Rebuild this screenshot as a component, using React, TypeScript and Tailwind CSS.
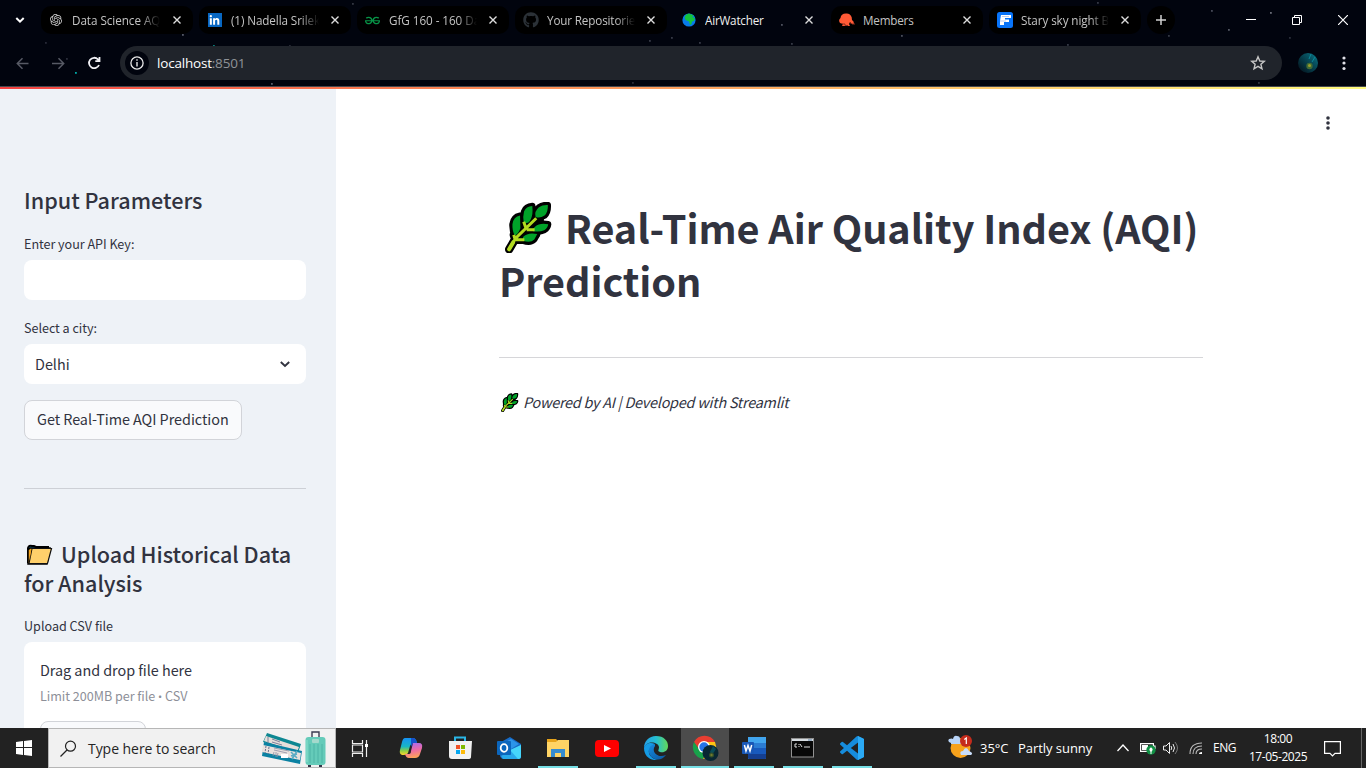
import type { ReactNode } from "react";
import { SiOpenai, SiGeeksforgeeks } from "react-icons/si";
import { FaGithub, FaLinkedinIn } from "react-icons/fa";

const leafBlades =
  "M157 22Q158 44 147 54Q133 63 120 58Q115 42 130 29Q141 21 157 22ZM110 25Q91 26 85 42Q81 57 84 74Q98 82 105 66Q113 50 110 25ZM73 54Q53 58 50 80Q49 100 57 114Q68 110 74 92ZM158 80Q132 75 119 87Q108 96 112 101Q132 105 146 98Q157 91 158 80ZM125 110Q96 104 82 119L82 130Q105 138 116 126Z";
const leafStem = "M40 156L60 122L122 62M84 73L90 90M93 97H117M54 112L58 126M60 127H86";

function Leaf({ className }: { className: string }) {
  return (
    <svg viewBox="22 13 147 154" className={className} strokeLinejoin="round">
      <path d={leafBlades} fill="#000" stroke="#000" strokeWidth="19" />
      <path d={leafStem} fill="none" stroke="#000" strokeWidth="25" strokeLinecap="round" />
      <path d="M70 120L120 60L145 60V85L130 120Z" fill="#000" />
      <path d={leafBlades} fill="#00a229" />
      <path d={leafStem} fill="none" stroke="#b2db20" strokeWidth="9" />
      <path d="M40 156L52 135" fill="none" stroke="#b2db20" strokeWidth="12" strokeLinecap="round" />
    </svg>
  );
}

function Folder() {
  return (
    <svg viewBox="0 0 27 22" className="h-[22px] w-[27px]">
      <path d="M2 19V4Q3 1 6 2H8L10 3H23" fill="#219bd3" stroke="#000" strokeWidth="2" />
      <path d="M2 6L4 4H24L21 20H2Z" fill="#f7a51c" stroke="#000" strokeWidth="1.5" />
      <path d="M6 4.5H25.5L21.5 19.5H3Z" fill="#ffd06b" stroke="#111" strokeWidth="1.2" />
      <path d="M3.5 6V17L5.5 5Z" fill="#f7a51c" />
    </svg>
  );
}

function Earth() {
  return (
    <svg viewBox="0 0 14 14" className="h-[14px] w-[14px]">
      <circle cx="7" cy="7" r="6.6" fill="#087bea" />
      <path d="M2.5 4Q4 1 7 .6L12 2.5L10 4L13 5L12 8L10 8.5L9.5 11L8 12L7 8.5L3.5 7Z" fill="#15c43c" />
    </svg>
  );
}

function Ghost() {
  return (
    <svg viewBox="0 0 16 14" className="h-[14px] w-4">
      <path d="M1 10Q-1 7 1.5 5Q2 0 8 .5Q13 1 13 7Q15 8 15 11H12L11 9L10 11L11 13H3L4 11Z" fill="#ff5a36" />
      <path d="M3 11H6V12.5H9M11 9L13 11H16" stroke="#8d2d1c" fill="none" />
    </svg>
  );
}

function FlowLogo() {
  return (
    <svg viewBox="0 0 16 16" className="h-4 w-4">
      <rect width="16" height="16" rx="2.5" fill="#0874f9" />
      <path d="M4 3H14V6H8V7.5H12V10H7V13H3V9Z" fill="#fff" />
      <path d="M5 4.5H12M3 9H9" stroke="#9db7e8" strokeWidth=".7" />
    </svg>
  );
}

function Cross() {
  return (
    <svg viewBox="0 0 8 8" className="h-2 w-2 shrink-0">
      <path d="M.5.5L7.5 7.5M7.5.5L.5 7.5" stroke="#dedede" strokeWidth="1.4" />
    </svg>
  );
}

type TabItem = { title: string; icon: ReactNode; active?: boolean; spacing: string; fade?: boolean };
const tabs: TabItem[] = [
  { title: "Data Science AQI", icon: <SiOpenai className="mr-[2px] h-3 w-3 text-[#d0d0d0]" />, spacing: "-ml-px tracking-[-0.05px]", fade: true },
  {
    title: "(1) Nadella Srilekha",
    icon: (
      <span className="mr-px flex h-[14px] w-[14px] items-center justify-center bg-[#0867c2]">
        <FaLinkedinIn className="h-[11px] w-[11px] text-white" />
      </span>
    ),
    spacing: "tracking-[-0.1px]",
    fade: true,
  },
  { title: "GfG 160 - 160 Days", icon: <SiGeeksforgeeks className="mr-px h-[15px] w-[15px] text-[#079447]" />, spacing: "tracking-[-0.05px]", fade: true },
  { title: "Your Repositories", icon: <FaGithub className="h-4 w-4 text-[#2b3137]" />, spacing: "tracking-[-0.15px]", fade: true },
  { title: "AirWatcher", icon: <Earth />, active: true, spacing: "tracking-[-0.2px]" },
  { title: "Members", icon: <Ghost />, spacing: "tracking-[-0.2px]" },
  { title: "Stary sky night Background", icon: <FlowLogo />, spacing: "tracking-[-0.1px]", fade: true },
];

function Tab({ tab }: { tab: TabItem }) {
  return (
    <div className={tab.active ? "flex h-7 w-[152px] items-center rounded-[10px] pr-[12px] pl-[8px]" : "flex h-7 w-[152px] items-center rounded-[10px] bg-black pr-[12px] pl-[8px]"}>
      <span className="mr-2 flex w-4 shrink-0 justify-center">{tab.icon}</span>
      <span
        className={`w-[88px] overflow-hidden pt-[2px] text-[11.7px] whitespace-nowrap ${tab.spacing} ${tab.active ? "text-[#f0f0f0]" : "text-[#c4c4c4]"} ${tab.fade ? "[mask-image:linear-gradient(to_right,black_78%,transparent)]" : ""}`}
      >
        {tab.title}
      </span>
      <span className="ml-auto">
        <Cross />
      </span>
    </div>
  );
}

const stars: [number, number, string][] = [
  [45, 42, "#262936"], [182, 34, "#545967"], [75, 72, "#00a9a5"], [213, 45, "#087b78"], [271, 83, "#555966"],
  [66, 58, "#292c38"], [289, 45, "#252834"], [352, 3, "#323641"], [632, 82, "#282b36"], [649, 40, "#353945"],
  [671, 37, "#353945"], [699, 42, "#353945"], [781, 24, "#4c505c"], [791, 43, "#343844"], [901, 35, "#484c58"],
  [1067, 44, "#343844"], [1097, 2, "#333744"], [1211, 10, "#454956"], [1228, 29, "#535763"], [1270, 12, "#686b76"],
  [1289, 37, "#292d38"], [1258, 82, "#30343f"], [1168, 35, "#343844"], [143, 6, "#444956"],
];

function Browser() {
  return (
    <header className="relative h-[87px] shrink-0 border-b border-[#44474e] bg-[#01040e] font-['Open_Sans','Noto_Sans',sans-serif]">
      <svg className="pointer-events-none absolute inset-0 h-[86px] w-full" viewBox="0 0 1366 86">
        {stars.map(([x, y, color]) => (
          <rect key={`${x}-${y}`} x={x} y={y} width="1.8" height="1.8" fill={color} />
        ))}
      </svg>
      <div className="relative flex h-10 items-center">
        <div className="flex w-[40px] justify-center">
          <svg viewBox="0 0 10 7" className="h-[7px] w-[10px]">
            <path d="M1.3 1L5 4.7L8.7 1" fill="none" stroke="#fff" strokeWidth="2" />
          </svg>
        </div>
        <div className="flex gap-[6px] pl-px">
          {tabs.map((t) => (
            <Tab key={t.title} tab={t} />
          ))}
          <div className="flex h-7 w-7 items-center justify-center rounded-full bg-black">
            <svg viewBox="0 0 10 10" className="h-[10px] w-[10px]">
              <path d="M5 0V10M0 5H10" stroke="#d0d0d0" strokeWidth="1.5" />
            </svg>
          </div>
        </div>
        <div className="ml-auto flex items-center gap-9 pr-[18px]">
          <svg className="h-[10px] w-[10px]" viewBox="0 0 10 10"><path d="M0 4.5H10" stroke="#fff" /></svg>
          <svg className="h-[10px] w-[10px]" viewBox="0 0 10 10"><path d="M.5 2.5H7.5V9.5H.5ZM2.5 2.5V.5H9.5V7.5H7.5" stroke="#fff" fill="none" /></svg>
          <svg className="h-[10px] w-[10px]" viewBox="0 0 10 10"><path d="M0 0L10 10M10 0L0 10" stroke="#fff" strokeWidth="1.2" /></svg>
        </div>
      </div>
      <div className="relative flex h-[46px] items-center">
        <div className="flex w-[120px] items-center gap-[23px] pl-4">
          <svg viewBox="0 0 13 13" className="h-[13px] w-[13px]"><path d="M12.5 6.5H1.5M6.5 1.3L1.3 6.5L6.5 11.7" fill="none" stroke="#575a65" strokeWidth="1.5" /></svg>
          <svg viewBox="0 0 13 13" className="h-[13px] w-[13px]"><path d="M0 6.5H11.5M6.5 1.3L11.7 6.5L6.5 11.7" fill="none" stroke="#575a65" strokeWidth="1.5" /></svg>
          <svg viewBox="0 0 14 14" className="-ml-px h-[14px] w-[14px]"><path d="M12 9A5.2 5.2 0 1 1 10.9 3.3L12.5 5M12.5 1V5.2H8.3" fill="none" stroke="#f1f1f5" strokeWidth="1.8" /></svg>
        </div>
        <div className="flex h-[34px] w-[1162px] items-center rounded-full bg-[#20242b] pr-4 pl-[5px]">
          <span className="flex h-6 w-6 items-center justify-center rounded-full bg-[#01040e]">
            <svg viewBox="0 0 14 14" className="h-[14px] w-[14px]"><circle cx="7" cy="7" r="6.1" stroke="#e8e8e8" fill="none" strokeWidth="1.3" /><path d="M7 6V10.5M7 3.3V4.8" stroke="#e8e8e8" strokeWidth="1.4" /></svg>
          </span>
          <span className="ml-2 pt-px text-[13.5px] tracking-[-0.2px] text-[#8f9297]"><span className="text-white">localhost</span>:8501</span>
          <svg viewBox="0 0 16 16" className="ml-auto h-4 w-4"><path d="M8 1.8L9.8 6L14.3 6.3L10.9 9.3L12 13.8L8 11.4L4 13.8L5.1 9.3L1.7 6.3L6.2 6Z" stroke="#c6c6c6" strokeWidth="1.4" fill="none" /></svg>
        </div>
        <svg viewBox="0 0 20 20" className="ml-4 h-5 w-5">
          <defs><linearGradient id="avatar" x1="0" y1="1" x2="1" y2="0"><stop offset=".2" stopColor="#04202b" /><stop offset=".7" stopColor="#075463" /><stop offset="1" stopColor="#0b7f90" /></linearGradient></defs>
          <circle cx="10" cy="10" r="10" fill="url(#avatar)" />
          <path d="M14 9L17 4M11 6L13 1" stroke="#0c8796" strokeWidth="1" />
          <circle cx="11.5" cy="13" r="3.2" fill="#3f6a36" />
          <circle cx="11.5" cy="12.5" r="1.5" fill="#9a9e2c" />
        </svg>
        <svg viewBox="0 0 4 16" className="ml-6 h-4 w-1"><circle cx="2" cy="3" r="1.6" fill="#e1e1e8" /><circle cx="2" cy="8" r="1.6" fill="#e1e1e8" /><circle cx="2" cy="13.5" r="1.6" fill="#e1e1e8" /></svg>
      </div>
    </header>
  );
}

function Sidebar() {
  return (
    <aside className="flex w-[336px] shrink-0 flex-col overflow-hidden bg-[#eef2f7] px-6 pt-[96px] pr-[30px]">
      <h2 className="h-[29px] shrink-0 text-[21.6px] leading-[29px] font-medium whitespace-nowrap">Input Parameters</h2>
      <label className="mt-[18px] h-6 shrink-0 text-[12.6px] leading-6 tracking-[-0.04px]">Enter your API Key:</label>
      <input aria-label="Enter your API Key" className="mt-1 h-10 shrink-0 rounded-lg bg-white px-3" />
      <label className="mt-4 h-6 shrink-0 text-[12.6px] leading-6 tracking-[-0.04px]">Select a city:</label>
      <button className="mt-1 flex h-10 shrink-0 items-center justify-between rounded-lg bg-white pr-4 pl-[11px] text-[14.4px]">
        Delhi
        <svg viewBox="0 0 10 7" className="h-[7px] w-[10px]"><path d="M.8 1L5 5L9.2 1" fill="none" stroke="#31333f" strokeWidth="1.9" /></svg>
      </button>
      <button className="mt-4 flex h-10 w-[218px] shrink-0 items-center rounded-lg border border-[#d2d4d9] bg-[#f9fafc] pb-[2px] pl-3 text-[14.4px] tracking-[-0.04px] whitespace-nowrap">
        Get Real-Time AQI Prediction
      </button>
      <hr className="mt-12 border-[#cdd0d6]" />
      <h2 className="mt-[50px] h-[58px] shrink-0 text-[21.6px] leading-[29px] font-medium tracking-[-0.02px] whitespace-nowrap">
        <span className="mr-[8px] ml-[2px] inline-block align-[-3px]"><span className="block h-[22px]"><Folder /></span></span>
        Upload Historical Data
        <br />
        for Analysis
      </h2>
      <label className="mt-[17px] h-6 shrink-0 text-[12.6px] leading-6">Upload CSV file</label>
      <section className="mt-[4px] h-[130px] shrink-0 rounded-lg bg-white px-4 pt-4">
        <div className="h-6 text-[14.4px] leading-6 tracking-[-0.04px]">Drag and drop file here</div>
        <div className="mt-1 h-5 text-[12.6px] leading-5 tracking-[-0.03px] text-[#8d8f98]">
          Limit 200MB per file <span className="font-['Open_Sans',sans-serif] text-[11px]">•</span> CSV
        </div>
        <button aria-label="Browse" className="mt-[15px] h-10 w-[106px] rounded-lg border border-[#d2d4d9] bg-[#f9fafc]" />
      </section>
    </aside>
  );
}

function TaskItem({ children, running, active }: { children: ReactNode; running?: boolean; active?: boolean }) {
  return (
    <div className={active ? "flex h-10 w-12 flex-col items-center bg-[#4c4c4c]" : "flex h-10 w-12 flex-col items-center"}>
      <div className="flex h-[38px] items-center pt-[2px]">{children}</div>
      <div className={active ? "h-[2px] w-12 bg-[#76dfe5]" : running ? "h-[2px] w-10 bg-[#76dfe5]" : "h-[2px] w-10"} />
    </div>
  );
}

function Copilot() {
  return (
    <svg viewBox="0 0 24 24" className="h-6 w-6">
      <defs>
        <linearGradient id="cpa" x1="0" y1="0" x2="0" y2="1"><stop stopColor="#1692f5" /><stop offset=".5" stopColor="#18b6c4" /><stop offset=".75" stopColor="#8bcf45" /><stop offset="1" stopColor="#ffd42b" /></linearGradient>
        <linearGradient id="cpb" x1=".3" y1="0" x2=".5" y2="1"><stop stopColor="#a96bf1" /><stop offset=".5" stopColor="#ee6ba5" /><stop offset="1" stopColor="#ffa554" /></linearGradient>
      </defs>
      <path d="M6 2H14Q17 2 18 7H14Q12 7 11 10L9 17Q8 19 5 19H3Q0 18 1 14L3 6Q4 2 6 2Z" fill="url(#cpa)" />
      <path d="M12 2H14Q17 2 18 7H14L12 11Z" fill="#1552cc" />
      <path d="M14 7H20Q24 7 23 12L21 18Q20 22 16 22H10Q7 22 6 18H10Q12 18 12 15Z" fill="url(#cpb)" />
    </svg>
  );
}
function Store() {
  return (
    <svg viewBox="0 0 24 24" className="h-6 w-6">
      <path d="M7 6V1.5H17V6" fill="none" stroke="#2ab7e8" strokeWidth="2" />
      <path d="M1 5H24L23 21Q23 23 20 23H4Q1 23 1 20Z" fill="#f1f1f1" />
      <path d="M8 9H12V13H8Z" fill="#f15226" /><path d="M13 9H17V13H13Z" fill="#7eba00" /><path d="M8 14H12V18H8Z" fill="#05a6ef" /><path d="M13 14H17V18H13Z" fill="#fdba08" />
    </svg>
  );
}
function Outlook() {
  return (
    <svg viewBox="0 0 24 24" className="h-6 w-6">
      <path d="M4 6L13 1L24 8V21Q24 23 21 23H6Q3 22 3 19V6Z" fill="#176bc6" /><path d="M7 7L14 3L22 8L14 13Z" fill="#2c95ea" /><path d="M4 20L24 9V20Q24 23 21 23H6Z" fill="#28a9eb" /><path d="M13 14L24 9V20Q24 23 21 23Z" fill="#46d6fb" /><rect y="5" width="14" height="14" rx="1" fill="#0b66bd" /><ellipse cx="7" cy="12" rx="3.3" ry="3.8" fill="none" stroke="#fff" strokeWidth="1.8" />
    </svg>
  );
}
function Explorer() {
  return (
    <svg viewBox="0 0 22 20" className="h-5 w-[22px]">
      <path d="M0 1H9L11 3H22V18H0Z" fill="#e7a41b" /><path d="M0 4H9L11 2H22V19H0Z" fill="#ffd465" /><path d="M4 19V11H18V19H14V15H8V19Z" fill="#368cd0" />
    </svg>
  );
}
function Edge() {
  return (
    <svg viewBox="0 0 24 24" className="h-6 w-6">
      <defs><linearGradient id="edgeTop"><stop stopColor="#269fe5" /><stop offset=".5" stopColor="#24bed3" /><stop offset="1" stopColor="#63d858" /></linearGradient><linearGradient id="edgeLow" x1="0" y1="0" x2="1" y2="1"><stop stopColor="#168ce0" /><stop offset="1" stopColor="#0a559f" /></linearGradient></defs>
      <path d="M0 12C0 5 5 0 12 0C20 0 24 5 24 10C24 15 20 17 16 16C13 15 15 14 15 11C14 6 3 4 0 12Z" fill="url(#edgeTop)" />
      <path d="M0 12C1 7 7 6 11 8C7 9 8 18 14 20C9 20 5 18 5 14C4 19 8 23 14 24C6 25 0 20 0 12Z" fill="#159be4" />
      <path d="M11 8C6 9 4 13 5 17C7 23 16 27 22 19C13 23 7 15 11 10Z" fill="url(#edgeLow)" />
    </svg>
  );
}
function Chrome() {
  return (
    <svg viewBox="0 0 27 26" className="h-[26px] w-[27px]">
      <path d="M2 7A12 12 0 0 1 23 7H12A6 6 0 0 0 7 15Z" fill="#e83e31" /><path d="M2 7A12 12 0 0 0 11 24L16 15A6 6 0 0 1 7 14Z" fill="#18a24a" /><path d="M12 7H23Q27 17 18 23L11 24L17 14A6 6 0 0 0 12 7Z" fill="#fdc315" /><circle cx="12" cy="12" r="6" fill="#fff" /><circle cx="12" cy="12" r="4.7" fill="#2573e8" />
      <circle cx="18.5" cy="18" r="8" fill="#082733" /><path d="M18 17L21 11L24 14L20 20Z" fill="#084c58" /><circle cx="19.5" cy="20" r="2.5" fill="#31512b" /><circle cx="19.5" cy="20" r="1.2" fill="#717a2e" />
    </svg>
  );
}
function Word() {
  return (
    <svg viewBox="0 0 24 22" className="h-[22px] w-6">
      <rect x="6" width="18" height="22" rx="1" fill="#2b7cd3" /><path d="M6 0H24V6H6Z" fill="#41a5ee" /><path d="M6 11H24V17H6Z" fill="#185abd" /><path d="M6 17H24V21Q24 22 23 22H7L6 21Z" fill="#143f91" /><rect y="5" width="12" height="12" rx="1" fill="#1958b7" /><path d="M2.4 8L4 14L6 8.5L8 14L9.7 8" fill="none" stroke="#fff" strokeWidth="1.5" />
    </svg>
  );
}
function Terminal() {
  return (
    <svg viewBox="0 0 23 20" className="-ml-[2px] h-5 w-[23px]">
      <rect x=".5" y=".5" width="22" height="18.5" fill="#080808" stroke="#929292" /><path d="M1 2H22" stroke="#d6dce1" strokeWidth="2" /><path d="M6 6H4V9H6M8 6V7M8 8V9M9 6L11 9M13 9H19" fill="none" stroke="#ddd" /><path d="M17 2H21" stroke="#6083a8" />
    </svg>
  );
}

function Travel() {
  return (
    <svg viewBox="256 728 80 38" className="-ml-[5px] h-[38px] w-20 shrink-0">
      <path d="M267 732L301 743L298 752L263 741Z" fill="#0d8792" />
      <path d="M266 735L299 746L297 751L264 740Z" fill="#e6dfda" />
      <path d="M268 736V742M272 738L280 741M272 741L282 744" stroke="#7f819b" strokeWidth="1" />
      <path d="M264 741L302 750L300 763L262 755Z" fill="#0b81a2" />
      <path d="M263 744L301 752L300 759L262 751Z" fill="#e9e1dd" />
      <path d="M266 745L265 752M269 746L268 753" stroke="#6d7090" strokeWidth="1" strokeDasharray="2 1" />
      <path d="M274 747L289 750M274 749L287 752M274 751L273 755M276 751L276 756M278 752L277 756" stroke="#8d8fa5" strokeWidth=".8" />
      <path d="M281 753H288V757H281Z" fill="#fff" />
      <path d="M291 751L297 757M297 750L292 758M291 755L297 753" stroke="#5bacc4" strokeWidth="1.6" />
      <path d="M312 737V731H319V737" fill="none" stroke="#3a3a50" strokeWidth="1.4" />
      <rect x="305.5" y="736" width="20" height="28" rx="3" fill="#65cbb9" />
      <path d="M310 743V762M314 743V762M318 743V762M322 743V762" stroke="#4fb4a6" strokeWidth="1" />
      <path d="M307 739V761" stroke="#8ce0ce" strokeWidth="1" />
      <rect x="312" y="738" width="7" height="4" rx="1" fill="#a4d9cc" />
      <path d="M308 765H311M319 765H322" stroke="#343448" strokeWidth="2" />
    </svg>
  );
}

function Taskbar() {
  return (
    <footer className="flex h-10 shrink-0 bg-[#222] font-['Open_Sans','Noto_Sans',sans-serif] text-white">
      <button className="flex w-12 items-center justify-center">
        <svg viewBox="0 0 16 16" className="h-4 w-4"><path d="M0 2L7 1V7H0ZM8 .9L16 0V7H8ZM0 8H7V15L0 14ZM8 8H16V16L8 15Z" fill="#fff" /></svg>
      </button>
      <div className="flex w-[288px] items-center overflow-hidden border border-[#b6b6b6] bg-[#f1f1f1] pl-[11px] text-[#252525]">
        <svg viewBox="0 0 17 17" className="h-[17px] w-[17px] shrink-0"><circle cx="10.5" cy="6.2" r="5" fill="none" stroke="#222" strokeWidth="1.2" /><path d="M7 10L.5 16.5" stroke="#222" strokeWidth="1.2" /></svg>
        <span className="ml-[11px] w-[173px] shrink-0 text-[14px] tracking-[-0.05px] whitespace-nowrap">Type here to search</span>
        <Travel />
      </div>
      <div className="flex w-[51px] items-center pl-[15px]">
        <svg viewBox="0 0 17 17" className="h-[17px] w-[17px]"><path d="M1.5 0V3.5H11.5V0M1.5 17V13.5H11.5V17M1.5 5H11.5V12H1.5ZM15.5 0V17" fill="none" stroke="#eee" strokeWidth="1.2" /><path d="M14 4H17V7H14Z" fill="#fff" /></svg>
      </div>
      <div className="flex gap-px">
        <TaskItem><Copilot /></TaskItem>
        <TaskItem><Store /></TaskItem>
        <TaskItem><Outlook /></TaskItem>
        <TaskItem running><Explorer /></TaskItem>
        <TaskItem><svg viewBox="0 0 24 17" className="h-[17px] w-6"><rect width="24" height="17" rx="4" fill="#f00" /><path d="M9 5L16 8.5L9 12Z" fill="#fff" /></svg></TaskItem>
        <TaskItem running><Edge /></TaskItem>
        <TaskItem active><Chrome /></TaskItem>
        <TaskItem running><Word /></TaskItem>
        <TaskItem running><Terminal /></TaskItem>
        <TaskItem running>
          <svg viewBox="0 0 24 24" className="h-6 w-6"><path fill="#168cdc" d="M23.15 2.587L18.21.21a1.494 1.494 0 0 0-1.705.29l-9.46 8.63-4.12-3.128a.999.999 0 0 0-1.276.057L.327 7.261A1 1 0 0 0 .326 8.74L3.899 12 .326 15.26a1 1 0 0 0 .001 1.479L1.65 17.94a.999.999 0 0 0 1.276.057l4.12-3.128 9.46 8.63a1.492 1.492 0 0 0 1.704.29l4.942-2.377A1.5 1.5 0 0 0 24 20.06V3.939a1.5 1.5 0 0 0-.85-1.352zm-5.146 14.861L10.826 12l7.178-5.448v10.896z" /><path d="M18 0L24 3V21L18 24Z" fill="#2baaf5" /></svg>
        </TaskItem>
      </div>
      <div className="ml-auto flex items-center">
        <svg viewBox="0 0 25 24" className="mb-[2px] h-6 w-[25px]"><circle cx="12.5" cy="13" r="10" fill="#f7a21c" /><path d="M3 8Q-1 7 1 4Q4 3 5 4Q6 0 9 1Q12 1 12 4Q16 8 12 9H3Z" fill="#b8d4f7" /><path d="M13 20Q11 16 15 16Q18 10 21 16Q26 18 23 20Z" fill="#c8dcf9" /><circle cx="18" cy="6" r="6" fill="#c42b1c" /><path d="M16.3 4.5L18.3 3V9" fill="none" stroke="#fff" strokeWidth="1.2" /></svg>
        <span className="ml-[7px] w-[38px] pt-px text-[13px] tracking-[-0.05px] whitespace-nowrap">35°C</span>
        <span className="w-[99px] pt-px text-[13px] tracking-[-0.05px] whitespace-nowrap">Partly sunny</span>
        <svg viewBox="0 0 12 8" className="h-2 w-3"><path d="M.5 7L6 1L11.5 7" fill="none" stroke="#fff" strokeWidth="1.3" /></svg>
        <svg viewBox="0 0 16 13" className="ml-[11px] h-[13px] w-4"><path d="M.6 1.6H13.4V9.4H.6ZM14 4H15V7" fill="none" stroke="#fff" strokeWidth="1.2" /><path d="M2 3H8V8H2Z" fill="#fff" /><circle cx="11" cy="8" r="4.7" fill="#109044" /><path d="M11 12V8" stroke="#fff" /><path d="M9.3 8Q9.3 6.5 11 5.3Q12.7 6.5 12.7 8L11 10Z" fill="#fff" /></svg>
        <svg viewBox="0 0 16 14" className="ml-[7px] h-[14px] w-4"><path d="M.5 5H3L6.5 1.5V12.5L3 9H.5ZM8 5Q9.5 7 8 9M10 3Q13 7 10 11" fill="none" stroke="#eee" /><path d="M12 1Q17 7 12 13" fill="none" stroke="#777" /></svg>
        <svg viewBox="0 0 14 14" className="ml-[10px] h-[14px] w-[14px]"><path d="M1 13Q1 2 13 2M4 13Q4 5 13 5M7 13Q7 8 13 8" fill="none" stroke="#bcbcbc" strokeWidth="1.1" /><path d="M10 13Q10 11 13 11V13Z" fill="#fff" /></svg>
        <span className="ml-[10px] w-[35px] text-[12px] tracking-[-0.5px]">ENG</span>
        <div className="flex w-[60px] flex-col items-center text-[12px] leading-[18px] tracking-[-0.45px] whitespace-nowrap"><span>18:00</span><span>17-05-2025</span></div>
        <svg viewBox="0 0 17 17" className="ml-[16px] h-[17px] w-[17px]"><path d="M.6 1.6H16.4V13.4H11L8.5 16L6 13.4H.6Z" fill="none" stroke="#fff" strokeWidth="1.2" /></svg>
        <div className="mr-1 ml-[20px] h-10 w-px bg-[#666]" />
      </div>
    </footer>
  );
}

export default function App() {
  return (
    <div className="flex h-[768px] w-[1366px] flex-col overflow-hidden bg-white text-[#31333f]">
      <Browser />
      <div className="h-[2px] shrink-0 bg-linear-to-r from-[#f44141] via-[#ffa25f] to-[#fffb80]" />
      <div className="flex min-h-0 flex-1 font-['Noto_Sans_CJK_SC',sans-serif]">
        <Sidebar />
        <main className="flex flex-1 flex-col pl-[163px]">
          <button className="mt-[27px] mr-[36px] self-end"><svg viewBox="0 0 4 14" className="h-[14px] w-1"><circle cx="2" cy="2" r="1.8" fill="#31333f" /><circle cx="2" cy="7" r="1.8" fill="#31333f" /><circle cx="2" cy="12" r="1.8" fill="#31333f" /></svg></button>
          <h1 className="mt-[70px] h-[106px] text-[39.6px] leading-[53px] font-bold tracking-[-0.06px] whitespace-nowrap">
            <span className="mr-[13px] ml-[4px] inline-block h-[35px] w-[49px] align-[-3px]"><Leaf className="-mt-[10px] h-[51px] w-[49px]" /></span>
            Real-Time Air Quality Index (AQI)
            <br />
            Prediction
          </h1>
          <hr className="mt-[51px] w-[704px] border-[#d6d6d9]" />
          <p className="mt-8 flex h-6 items-center text-[14.4px] tracking-[-0.24px] italic">
            <Leaf className="mr-[4px] ml-px h-[19px] w-[19px]" />
            Powered by AI | Developed with Streamlit
          </p>
        </main>
      </div>
      <Taskbar />
    </div>
  );
}
